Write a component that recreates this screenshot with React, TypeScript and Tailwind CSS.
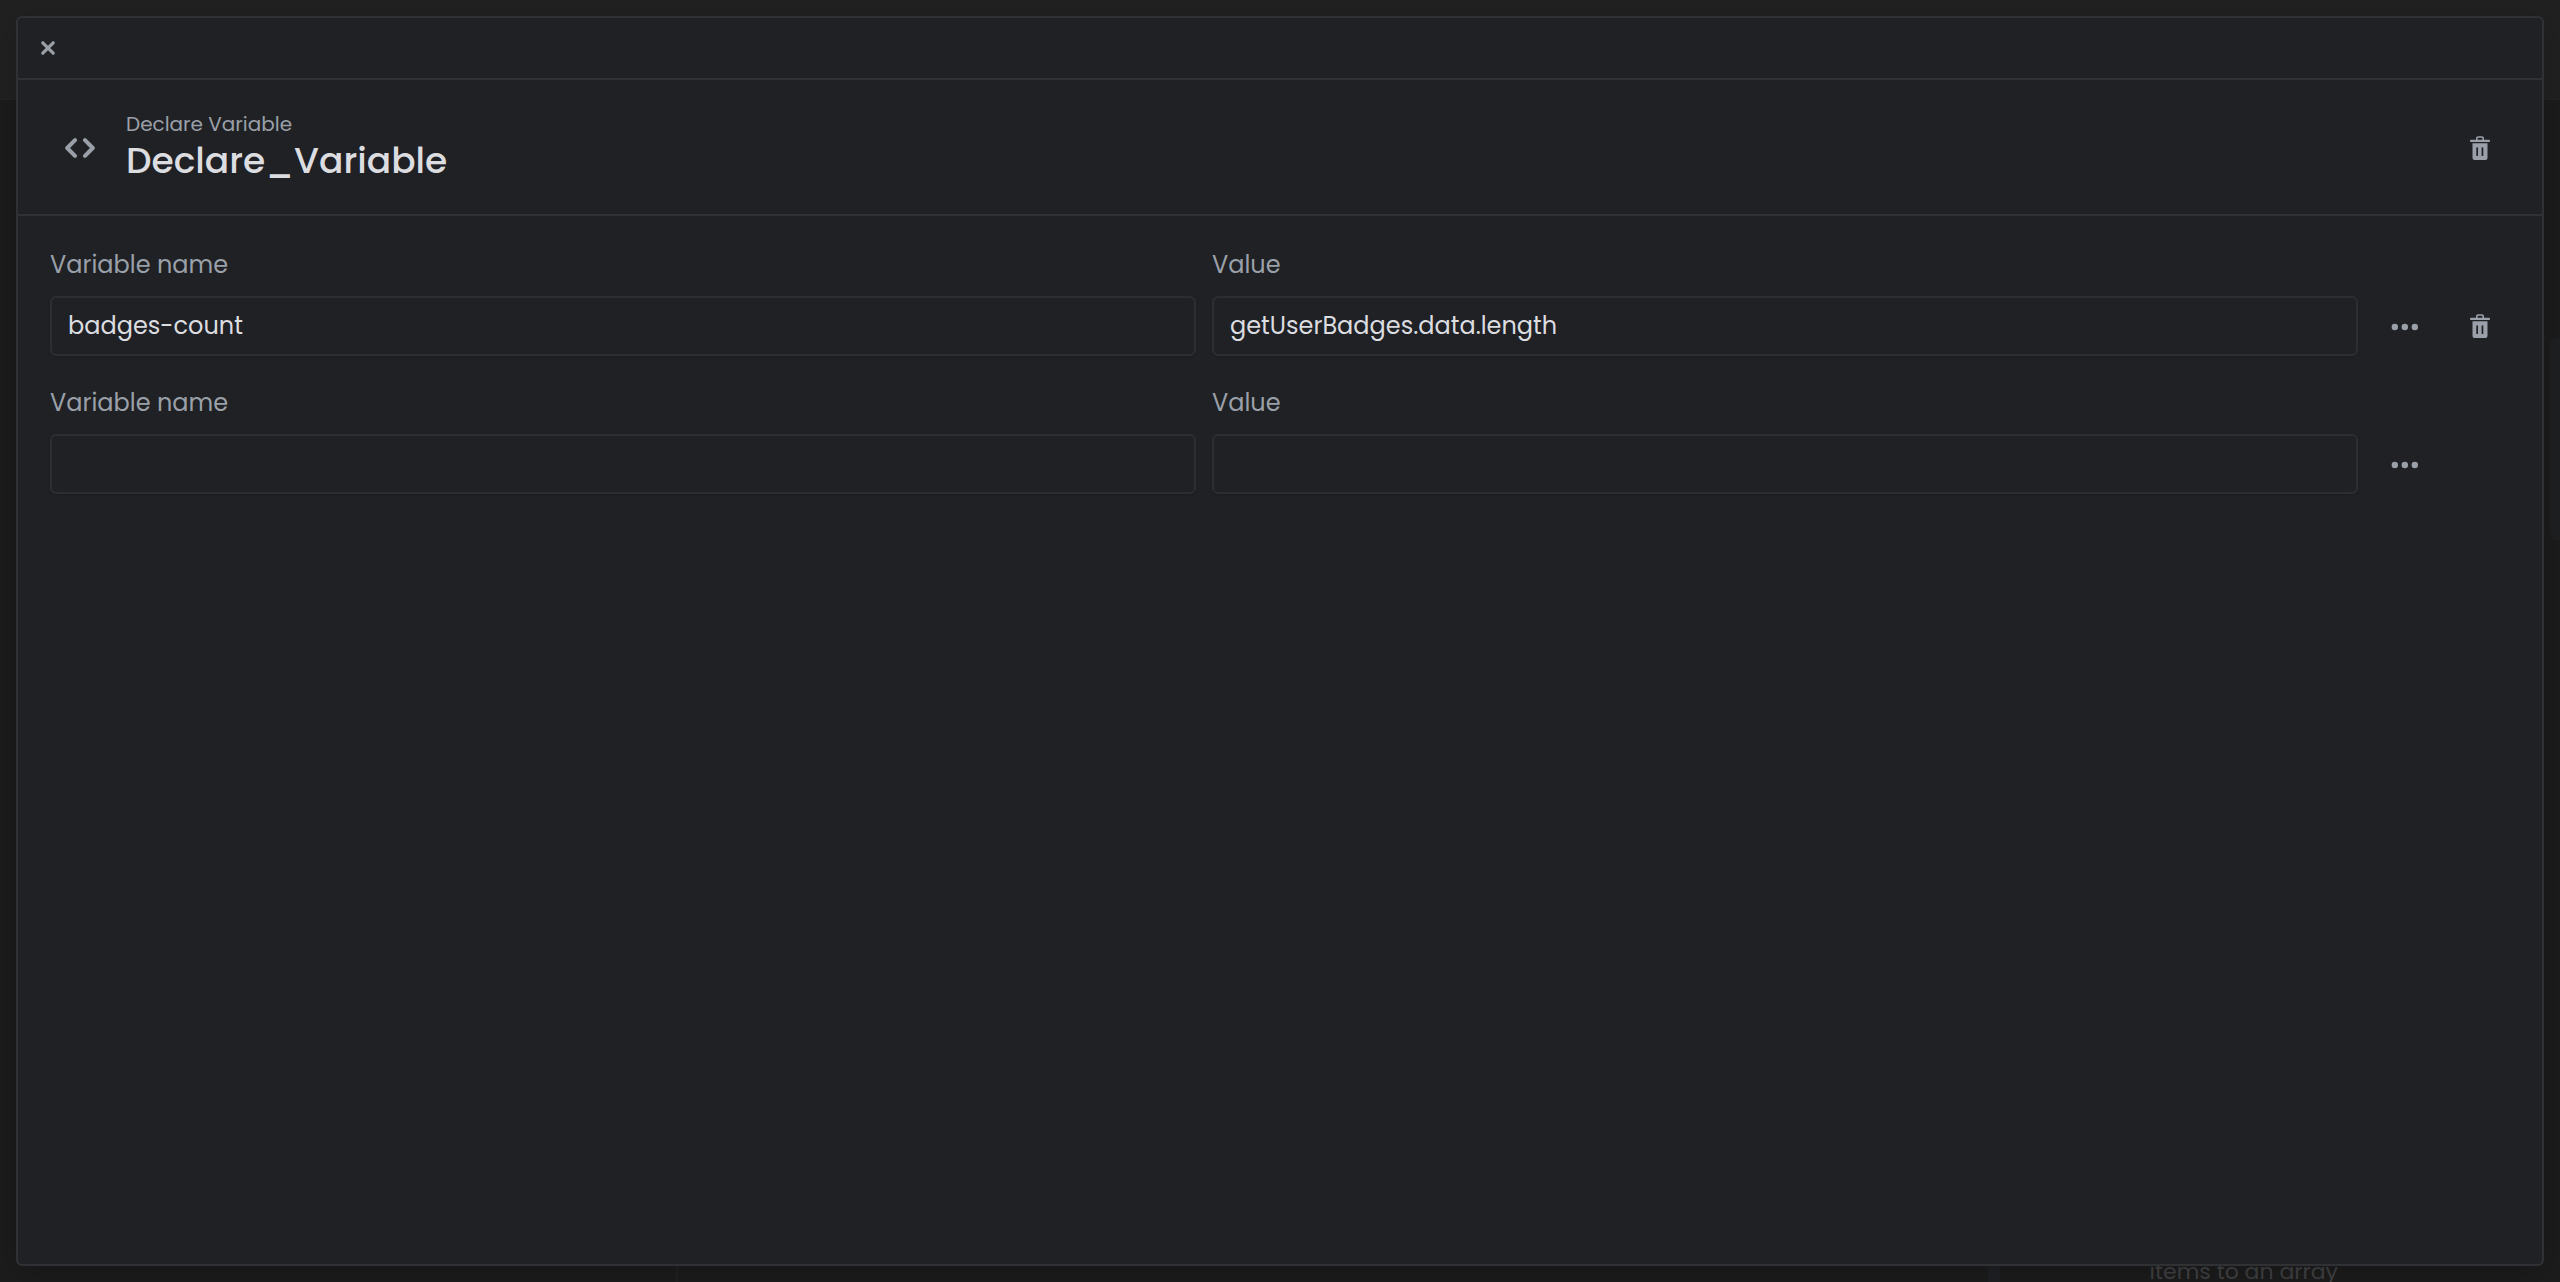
import React, { useState } from 'react';

interface Variable {
  id: number;
  name: string;
  value: string;
}

const CloseIcon: React.FC = () => (
  <svg className="size-4" viewBox="0 0 16 16" fill="none" stroke="currentColor" strokeWidth="3.2" strokeLinecap="round">
    <path d="M2.800 2.800l10.400 10.400M13.200 2.800L2.800 13.200" />
  </svg>
);

const CodeIcon: React.FC = () => (
  <svg
    className="h-5 w-8"
    viewBox="0 0 32 20"
    fill="none"
    stroke="currentColor"
    strokeWidth="4"
    strokeLinecap="round"
    strokeLinejoin="round"
  >
    <path d="M11 2.200L3.200 10l7.800 7.800M21 2.200L28.800 10 21 17.800" />
  </svg>
);

const TrashIcon: React.FC = () => (
  <svg className="h-6 w-5" viewBox="0 0 20 24" fill="currentColor">
    <path d="M8 0.200h4a2 2 0 0 1 2 2V3.700h5a1 1 0 0 1 1 1v0.500a0.800 0.800 0 0 1-.8.800H.8A.8.8 0 0 1 0 5.200V4.700a1 1 0 0 1 1-1h5V2.200a2 2 0 0 1 2-2zm-.4 3.500h4.800V2.400a.7.7 0 0 0-.7-.7H8.300a.7.7 0 0 0-.7.700z" />
    <path
      fillRule="evenodd"
      d="M2.500 7.200h15V22a2 2 0 0 1-2 2h-11a2 2 0 0 1-2-2zM6.300 12v7.200a.8.800 0 0 0 1.700 0V12a.8.800 0 0 0-1.700 0zm5.300 0v7.200a.8.800 0 0 0 1.700 0V12a.8.800 0 0 0-1.700 0z"
    />
  </svg>
);

const DotsIcon: React.FC = () => (
  <svg className="h-2.5 w-7" viewBox="0 0 28 10" fill="currentColor">
    <circle cx="4.800" cy="6" r="3.200" />
    <circle cx="14.800" cy="6" r="3.200" />
    <circle cx="24.800" cy="6" r="3.200" />
  </svg>
);

interface IconButtonProps {
  label: string;
  onClick?: () => void;
  children: React.ReactNode;
}

const IconButton: React.FC<IconButtonProps> = ({ label, onClick, children }) => (
  <button
    type="button"
    aria-label={label}
    onClick={onClick}
    className="flex size-[60px] shrink-0 items-center justify-center text-[#9aa0a9]"
  >
    {children}
  </button>
);

interface FieldProps {
  id: string;
  label: string;
  value: string;
  onChange: (value: string) => void;
}

const Field: React.FC<FieldProps> = ({ id, label, value, onChange }) => (
  <div className="min-w-0 flex-1">
    <label htmlFor={id} className="mb-[15px] block text-2xl text-[#9aa0a9]">
      {label}
    </label>
    <input
      id={id}
      type="text"
      value={value}
      onChange={(e) => onChange(e.target.value)}
      className="block h-[60px] w-full rounded-md border-2 border-[#2d2e34] bg-[#202124] px-4 pb-0.5 text-2xl text-[#dcdde0] shadow-sm outline-none"
    />
  </div>
);

// Dimmed editor that stays behind the dialog
const Backdrop: React.FC = () => (
  <div aria-hidden="true" className="absolute inset-0 overflow-hidden bg-[#1c1c1c]">
    <div className="h-[98px] bg-[#202120]" />
    <div className="h-0.5 bg-[#222322]" />
    <div className="absolute right-0 top-[338px] h-[202px] w-[10px] rounded-l-md bg-[#1f2022]" />
    <div className="absolute bottom-0 left-[676px] h-4 w-0.5 bg-[#202122]" />
    <div className="absolute bottom-0 right-[560px] h-4 w-3 bg-[#1f2023]" />
    <p className="absolute -bottom-1.5 right-[222px] text-[22px] leading-8 text-[#404143]">items to an array</p>
  </div>
);

export default function App() {
  const [variables, setVariables] = useState<Variable[]>([
    { id: 1, name: 'badges-count', value: 'getUserBadges.data.length' },
    { id: 2, name: '', value: '' },
  ]);

  const updateVariable = (id: number, changes: Partial<Variable>) => {
    setVariables((current) => current.map((v) => (v.id === id ? { ...v, ...changes } : v)));
  };

  const removeVariable = (id: number) => {
    setVariables((current) => current.filter((v) => v.id !== id));
  };

  return (
    <div className="relative flex min-h-screen p-4 font-[Poppins,Inter,sans-serif]">
      <Backdrop />
      <div
        role="dialog"
        aria-labelledby="dialog-title"
        className="relative flex-1 rounded-md border-2 border-[#303135] bg-[#202124] shadow-[0_8px_32px_rgba(0,0,0,0.2)]"
      >
        <div className="flex border-b-2 border-[#303135]">
          <IconButton label="Close">
            <CloseIcon />
          </IconButton>
        </div>

        <header className="flex h-[136px] items-center gap-4 border-b-2 border-[#303135] px-8 pt-0.5">
          <div className="flex size-[60px] items-center justify-center text-[#9aa0a9]">
            <CodeIcon />
          </div>
          <div className="flex-1 pb-0.5">
            <p className="text-xl text-[#9aa0a9]">Declare Variable</p>
            <h1 id="dialog-title" className="text-4xl font-medium leading-[46px] text-[#dcdde0]">
              Declare_Variable
            </h1>
          </div>
          <IconButton label="Delete action">
            <TrashIcon />
          </IconButton>
        </header>

        <main className="flex flex-col gap-[31px] px-8 pt-[33px] pb-8">
          {variables.map((variable) => (
            <div key={variable.id} className="flex items-end gap-4">
              <Field
                id={`name-${variable.id}`}
                label="Variable name"
                value={variable.name}
                onChange={(name) => updateVariable(variable.id, { name })}
              />
              <Field
                id={`value-${variable.id}`}
                label="Value"
                value={variable.value}
                onChange={(value) => updateVariable(variable.id, { value })}
              />
              <IconButton label="More options">
                <DotsIcon />
              </IconButton>
              {variable.name ? (
                <IconButton label="Delete variable" onClick={() => removeVariable(variable.id)}>
                  <TrashIcon />
                </IconButton>
              ) : (
                <div className="size-[60px] shrink-0" />
              )}
            </div>
          ))}
        </main>
      </div>
    </div>
  );
}
